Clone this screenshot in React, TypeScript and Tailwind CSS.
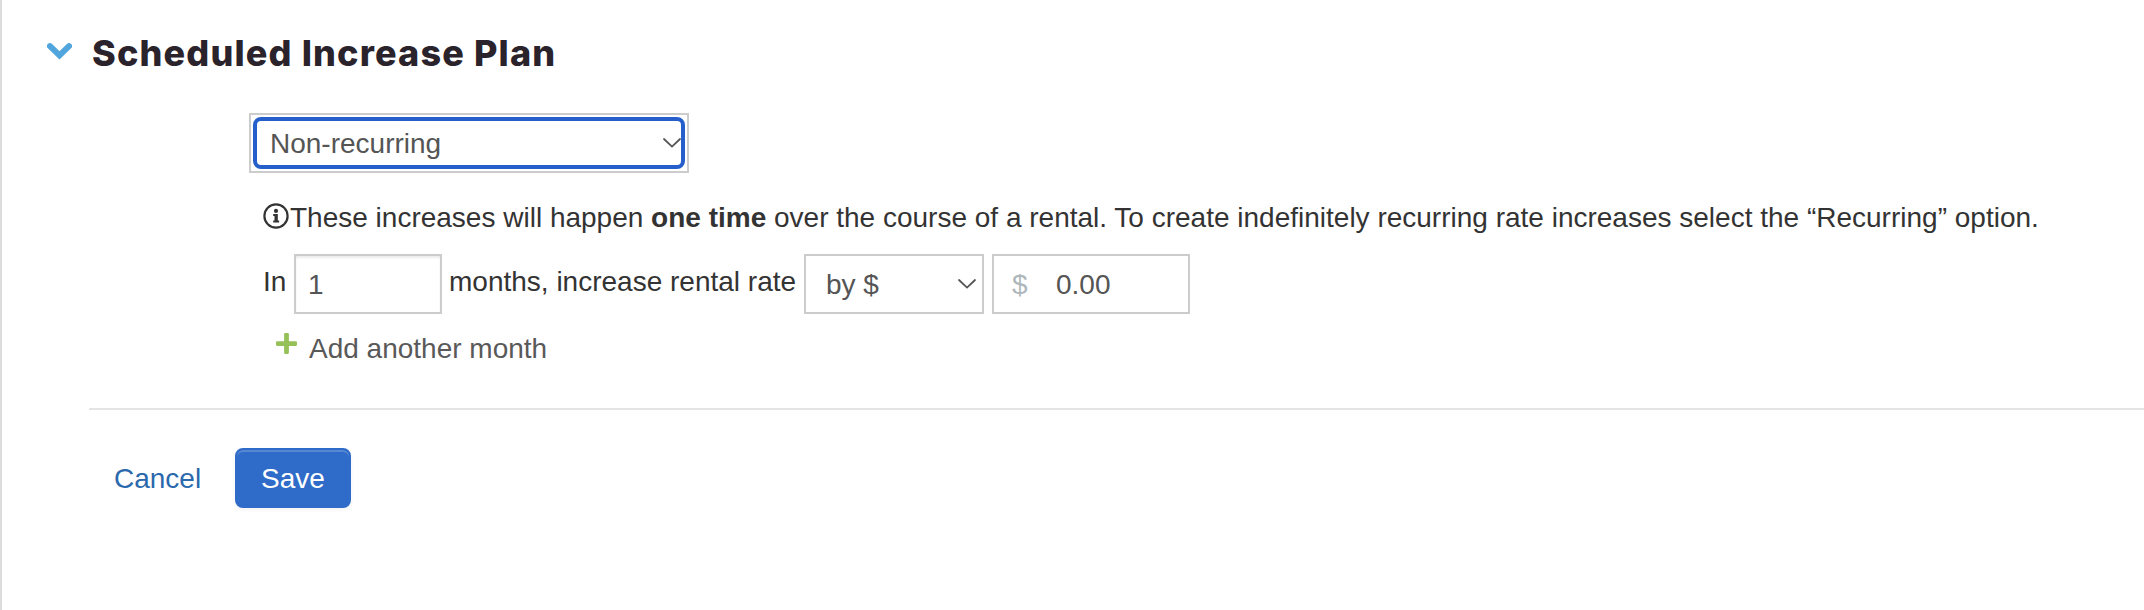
const Chevron = ({ className }: { className?: string }) => (
  <svg viewBox="0 0 18 10" className={`w-[18px] h-[10px] shrink-0 ${className ?? ""}`} fill="none">
    <path d="M1 1l8 7.6L17 1" stroke="#555" strokeWidth="1.8" strokeLinecap="round" />
  </svg>
);

const App = () => {
  return (
    <div className="w-full h-[610px] overflow-hidden bg-white border-l-2 border-[#dcdcdc] text-[28px] leading-[40px] text-[#333] font-['Liberation_Sans',Arial,sans-serif]">
      <div className="flex items-start pl-[45px] pt-[33px]">
        <svg viewBox="0 0 25 17" className="w-[25px] h-[17px] mt-[10px]" fill="none">
          <path d="M3 3.2l9.5 9.2L22 3.2" stroke="#4fa5dc" strokeWidth="6" strokeLinecap="round" />
        </svg>
        <h2 className="ml-5 font-extrabold text-[36px] leading-[40px] tracking-[1.15px] text-[#2a232b] font-['Inter',sans-serif]">
          Scheduled Increase Plan
        </h2>
      </div>

      <div className="ml-[247px] mt-[40px]">
        <div className="w-[440px] h-[60px] border-2 border-[#ccc] p-[2px]">
          <div className="w-full h-full border-4 border-[#265fcb] rounded-[8px] flex items-center justify-between pl-[13px] text-[#555]">
            <span className="pt-[2px]">Non-recurring</span>
            <Chevron />
          </div>
        </div>

        <div className="ml-[14px] mt-[25px] flex items-start whitespace-nowrap">
          <svg viewBox="0 0 26 26" className="w-[26px] h-[26px] mt-[5px] shrink-0" fill="#333">
            <circle cx="13" cy="13" r="11.6" fill="none" stroke="#333" strokeWidth="2.2" />
            <circle cx="13" cy="7.9" r="2.1" />
            <path d="M10.2 11h4.6v6.4h1.3v2.2h-5.9v-2.2h1.3V13h-1.3z" />
          </svg>
          <p className="ml-px">
            These increases will happen <b>one time</b> over the course of a rental. To create indefinitely recurring rate increases select the “Recurring” option.
          </p>
        </div>

        <div className="ml-[14px] mt-[16px] flex items-start whitespace-nowrap">
          <span className="w-[31px] mt-2">In</span>
          <div className="w-[148px] h-[60px] border-2 border-[#ccc] shadow-[inset_0_2px_2px_rgba(0,0,0,0.08)] pl-[12px] pt-[9px] text-[#555]">
            1
          </div>
          <span className="w-[362px] pl-[7px] mt-2">months, increase rental rate</span>
          <div className="w-[180px] h-[60px] border-2 border-[#ccc] flex justify-between pl-[20px] pr-[6px] pt-[9px] text-[#555]">
            <span>by $</span>
            <Chevron className="mt-[14px]" />
          </div>
          <div className="ml-2 w-[198px] h-[60px] border-2 border-[#ccc] flex pl-[18px] pt-[9px] text-[#555]">
            <span className="w-[44px] text-[#aeb7bb]">$</span>
            <span>0.00</span>
          </div>
        </div>

        <div className="ml-[27px] mt-[15px] flex items-start text-[#595959]">
          <svg viewBox="0 0 22 22" className="w-[21px] h-[21px] mt-1" fill="#96c058">
            <rect x="0" y="8.6" width="22" height="5" rx="1.2" />
            <rect x="8.5" y="0" width="5" height="22" rx="1.2" />
          </svg>
          <span className="ml-3">Add another month</span>
        </div>
      </div>

      <div className="ml-[87px] mt-[39px] h-[2px] bg-[#e4e4e4]" />

      <div className="mt-[38px] ml-[112px] flex items-center">
        <a className="w-[121px] pt-[2px] text-[#2b69ad]">Cancel</a>
        <button className="w-[116px] h-[60px] pt-[2px] rounded-[8px] bg-[#2f6bc8] text-white border-2 border-[#2f6bc8] shadow-[inset_0_2px_0_rgba(255,255,255,0.2),0_2px_4px_rgba(0,0,0,0.05)]">
          Save
        </button>
      </div>
    </div>
  );
};

export default App;
